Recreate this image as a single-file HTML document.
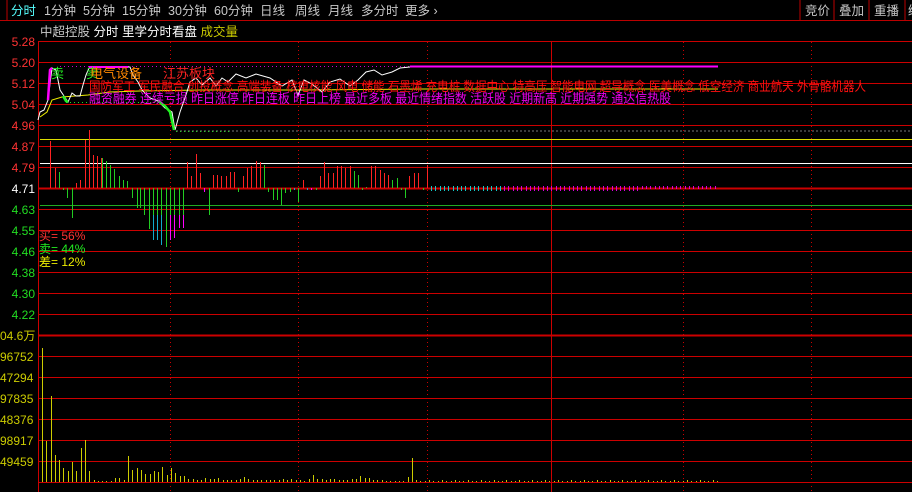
<!DOCTYPE html>
<html><head><meta charset="utf-8"><style>
body{margin:0;background:#000;width:912px;height:492px;overflow:hidden;font-family:"Liberation Sans","Noto Sans CJK SC",sans-serif}
svg{position:absolute;left:0;top:0}
</style></head><body>
<svg width="912" height="492" xmlns="http://www.w3.org/2000/svg" font-family="Liberation Sans, Noto Sans CJK SC, sans-serif">
<rect width="912" height="492" fill="#000"/>
<g font-size="12.5" fill="#c8c8c8">
<text x="11" y="15" fill="#5ff">分时</text>
<text x="44" y="15">1分钟</text><text x="83" y="15">5分钟</text><text x="122" y="15">15分钟</text>
<text x="168" y="15">30分钟</text><text x="214" y="15">60分钟</text><text x="260" y="15">日线</text>
<text x="295" y="15">周线</text><text x="328" y="15">月线</text><text x="361" y="15">多分时</text><text x="405" y="15">更多 ›</text>
<text x="805" y="15">竞价</text><text x="839" y="15">叠加</text><text x="874" y="15">重播</text><text x="908" y="15">绘</text>
</g>
<line x1="7" y1="0" x2="7" y2="20" stroke="#b00"/>
<line x1="800" y1="0" x2="800" y2="20" stroke="#b00"/><line x1="834" y1="0" x2="834" y2="20" stroke="#b00"/><line x1="869" y1="0" x2="869" y2="20" stroke="#b00"/><line x1="905" y1="0" x2="905" y2="20" stroke="#b00"/>
<line x1="0" y1="20.5" x2="912" y2="20.5" stroke="#b00"/>
<text x="40" y="36" font-size="12.5" fill="#c8c8c8">中超控股 <tspan fill="#fff">分时 里学分时看盘</tspan> <tspan fill="#cc0">成交量</tspan></text>
<line x1="38.5" y1="41" x2="38.5" y2="492" stroke="#c00"/>
<g stroke="#c00" stroke-width="1">
<line x1="38" y1="41.5" x2="912" y2="41.5"/><line x1="38" y1="62.5" x2="912" y2="62.5"/><line x1="38" y1="83.5" x2="912" y2="83.5"/>
<line x1="38" y1="104.5" x2="912" y2="104.5"/><line x1="38" y1="125.5" x2="912" y2="125.5"/><line x1="38" y1="146.5" x2="912" y2="146.5"/>
<line x1="38" y1="167.5" x2="912" y2="167.5"/><line x1="38" y1="188.5" x2="912" y2="188.5" stroke-width="2"/><line x1="38" y1="209.5" x2="912" y2="209.5"/>
<line x1="38" y1="230.5" x2="912" y2="230.5"/><line x1="38" y1="251.5" x2="912" y2="251.5"/><line x1="38" y1="272.5" x2="912" y2="272.5"/>
<line x1="38" y1="293.5" x2="912" y2="293.5"/><line x1="38" y1="314.5" x2="912" y2="314.5"/><line x1="38" y1="335.5" x2="912" y2="335.5" stroke-width="2"/>
<line x1="38" y1="356.5" x2="912" y2="356.5"/><line x1="38" y1="377.5" x2="912" y2="377.5"/><line x1="38" y1="398.5" x2="912" y2="398.5"/>
<line x1="38" y1="419.5" x2="912" y2="419.5"/><line x1="38" y1="440.5" x2="912" y2="440.5"/><line x1="38" y1="461.5" x2="912" y2="461.5"/><line x1="38" y1="482.5" x2="912" y2="482.5"/>
</g>
<g stroke="#c00" stroke-dasharray="1,3">
<line x1="170.5" y1="42" x2="170.5" y2="492"/><line x1="298.5" y1="42" x2="298.5" y2="492"/><line x1="427.5" y1="42" x2="427.5" y2="492"/>
<line x1="683.5" y1="42" x2="683.5" y2="492"/><line x1="811.5" y1="42" x2="811.5" y2="492"/>
</g>
<line x1="551.5" y1="42" x2="551.5" y2="492" stroke="#c00"/>
<g font-size="12" text-anchor="end">
<g fill="#f33"><text x="35" y="46">5.28</text><text x="35" y="67">5.20</text><text x="35" y="88">5.12</text><text x="35" y="109">5.04</text><text x="35" y="130">4.96</text><text x="35" y="151">4.87</text><text x="35" y="172">4.79</text></g>
<text x="35" y="193" fill="#fff">4.71</text>
<g fill="#2d2"><text x="35" y="214">4.63</text><text x="35" y="235">4.55</text><text x="35" y="256">4.46</text><text x="35" y="277">4.38</text><text x="35" y="298">4.30</text><text x="35" y="319">4.22</text></g>
</g>
<g font-size="12" fill="#cc0"><text x="0" y="340">04.6万</text><text x="0" y="361">96752</text><text x="0" y="382">47294</text><text x="0" y="403">97835</text><text x="0" y="424">48376</text><text x="0" y="445">98917</text><text x="0" y="466">49459</text></g>
<line x1="40" y1="139.5" x2="912" y2="139.5" stroke="#dd0" stroke-width="1"/>
<line x1="40" y1="163.5" x2="912" y2="163.5" stroke="#fff"/>
<line x1="40" y1="205.5" x2="912" y2="205.5" stroke="#2a2"/>
<line x1="176" y1="131" x2="912" y2="131" stroke="#777" stroke-dasharray="2,2"/>
<line x1="60" y1="66.5" x2="718" y2="66.5" stroke="#c0c" stroke-dasharray="1,3"/>
<line x1="66" y1="102.5" x2="158" y2="102.5" stroke="#2d2" stroke-dasharray="1,3"/>
<line x1="176" y1="131.5" x2="230" y2="131.5" stroke="#2d2" stroke-dasharray="1,3"/>
<g id="bars"></g>
<polyline fill="none" stroke="#ee0" stroke-width="1" points="40,117 47,112 52,100 62,97 75,96 88,95 110,92 140,91 200,90 300,90 420,89 550,89 718,89"/>
<polyline fill="none" stroke="#fff" stroke-width="1" points="38,120 40,112 44,110 48,100 52,68 56,70 60,90 64,96 68,102 72,93 76,96 80,96 83,85 86,75 89,68 92,67 130,67 133,75 138,82 142,90 150,98 158,101 165,108 172,112 175,130 180,112 186,95 190,82 196,78 202,85 210,78 216,86 222,78 228,82 236,74 246,78 256,74 270,78 282,86 292,80 298,95 304,80 312,84 322,92 330,82 340,79 350,86 358,80 366,72 374,70 382,75 392,72 400,68 410,67"/>
<polyline fill="none" stroke="#f0f" stroke-width="2.5" points="48,100 50,70 52,68"/>
<polyline fill="none" stroke="#f0f" stroke-width="2" points="89,67 128,67"/>
<polyline fill="none" stroke="#f0f" stroke-width="2" points="410,66.5 718,66.5"/>
<polyline fill="none" stroke="#2e2" stroke-width="2.5" points="63,96 66,101 68,102"/>
<polyline fill="none" stroke="#2e2" stroke-width="2.5" points="158,101 165,106 170,112 174,130"/>
<g font-size="13">
<text x="51" y="78" fill="#2e2">卖</text><text x="86" y="78" fill="#2e2">卖</text>
<text x="90" y="78" fill="#f80">电气设备</text><text x="163" y="78" fill="#f22">江苏板块</text>
<text x="89" y="91" fill="#f11" textLength="777" lengthAdjust="spacingAndGlyphs">国防军工 军民融合 创投概念 高端装备 核电核能 风电 储能 石墨烯 充电桩 数据中心 特高压 智能电网 超导概念 医美概念 低空经济 商业航天 外骨骼机器人</text>
<text x="89" y="103" fill="#e0e" textLength="582" lengthAdjust="spacingAndGlyphs">融资融券 连续亏损 昨日涨停 昨日连板 昨日上榜 最近多板 最近情绪指数 活跃股 近期新高 近期强势 通达信热股</text>
</g>
<g font-size="12"><text x="39" y="240" fill="#f33">买= 56%</text><text x="39" y="253" fill="#2e2">卖= 44%</text><text x="39" y="266" fill="#ee0">差= 12%</text></g>
<g id="vol"></g>
</svg>
<script>
var ns="http://www.w3.org/2000/svg";
function L(g,x,y1,y2,c){var l=document.createElementNS(ns,"line");l.setAttribute("x1",x);l.setAttribute("x2",x);l.setAttribute("y1",y1);l.setAttribute("y2",y2);l.setAttribute("stroke",c);document.getElementById(g).appendChild(l);}
var R="#f22",G="#2c2",M="#f0f",C="#1ac";
var b=[[50,141,R],[55,168,R],[59,172,G],[63,190,G],[67,198,G],[72,218,G],[76,183,R],[80,180,R],[85,140,R],[89,130,R],[93,155,R],[97,156,R],[101,158,R],[102,158,G],[106,161,G],[110,165,G],[114,169,G],[119,176,G],[123,180,G],[127,181,G],[132,198,G],[137,208,G],[140,208,G],[144,215,G],[149,229,G],[153,230,G],[157,230,G],[161,230,G],[166,230,G],[170,230,G],[174,225,G],[179,220,G],[183,216,G],[187,162,R],[191,176,R],[196,154,R],[200,173,R],[204,192,M],[209,215,G],[213,175,R],[217,175,R],[221,176,R],[226,176,R],[230,172,R],[234,172,R],[238,192,G],[243,176,R],[247,168,R],[251,166,R],[256,161,R],[260,162,R],[264,165,G],[268,192,G],[273,200,G],[277,200,G],[281,205,G],[285,193,G],[290,192,G],[294,190,C],[298,202,G],[303,180,R],[307,190,C],[311,190,M],[316,190,G],[320,176,R],[324,162,R],[328,173,R],[333,173,R],[337,166,R],[341,166,R],[345,168,R],[350,166,R],[354,171,G],[358,175,G],[362,190,G],[366,187,G],[371,166,R],[375,166,R],[380,170,R],[384,173,R],[388,175,R],[392,180,G],[397,178,G],[401,190,G],[405,198,G],[409,176,R],[414,173,R],[418,173,R],[423,190,G],[427,165,R]];
b.forEach(function(s){L("bars",s[0]+0.5,188,s[1],s[2]);});
var sp=[[153,240,C],[157,240,C],[161,245,C],[166,247,G],[170,240,M],[174,238,M],[179,228,M],[183,228,M]];
sp.forEach(function(s){L("bars",s[0]+0.5,215,s[1],s[2]);});
for(var xx=431;xx<718;xx+=4.3){var c=(xx<500?"#1cc":"#d0d");L("bars",Math.round(xx)+0.5,186,xx<640?191:189,c);}
var vv=[134,41,86,27,22,14,11,20,11,34,42,11,2,1,1,1,1,4,4,2,26,12,14,12,8,8,11,10,15,7,14,9,6,6,3,3,2,2,4,3,3,4,2,2,2,2,3,5,3,2,2,2,2,2,2,2,3,2,3,2,2,1,3,7,3,3,2,3,3,2,2,2,3,3,6,4,4,2,2,2,1,1,1,1,1,5,24,2,1];
while(vv.length<158)vv.push(vv.length%3?1:2);
var vx=42;for(var i=0;i<vv.length;i++){L("vol",Math.round(vx)+0.5,482,482-vv[i],"#cc0");vx+=4.3;}
</script>
</body></html>
